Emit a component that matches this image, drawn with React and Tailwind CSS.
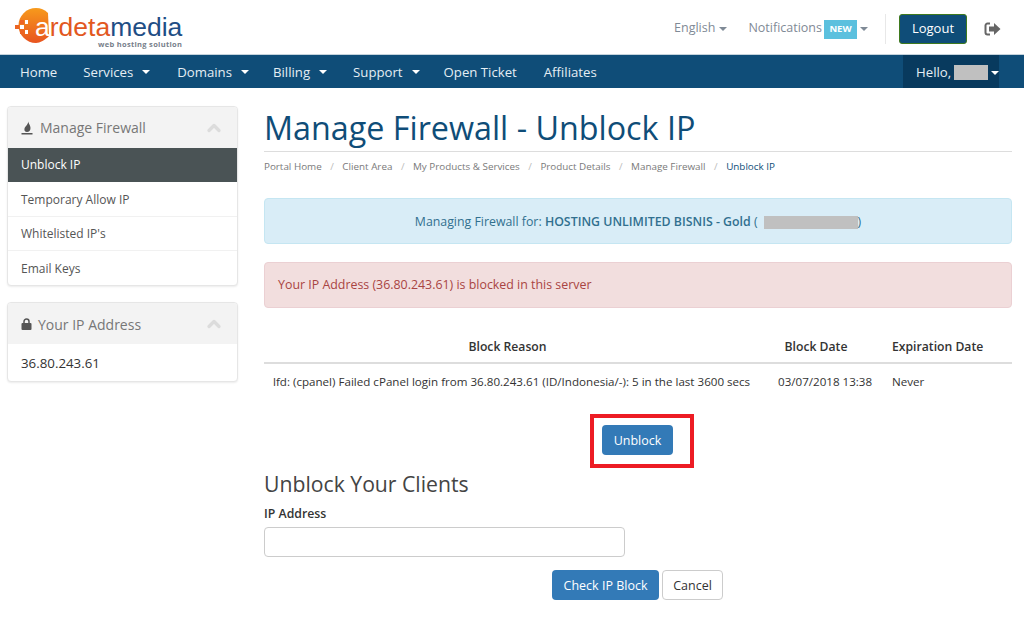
import React from 'react';
import { ChevronUp } from 'lucide-react';

function Caret({ className = '' }) {
  return <span className={`inline-block w-0 h-0 border-x-[4px] border-x-transparent border-t-[4px] border-t-current ${className}`} />;
}

function Logo() {
  return (
    <div className="relative w-[172px] h-[42px]">
      <svg width="44" height="38" viewBox="0 0 44 38" className="absolute left-0 top-0">
        <defs>
          <linearGradient id="lg" x1="0" y1="0" x2="0" y2="1">
            <stop offset="0" stopColor="#f79a1c" />
            <stop offset="1" stopColor="#e8541f" />
          </linearGradient>
        </defs>
        <path d="M22 2 A17.500 17.500 0 0 1 34 7 L35 30 C31 34 26 37 22 37 A17.500 17.500 0 0 1 22 2 Z" fill="url(#lg)" />
        <rect x="1" y="19" width="4" height="4" fill="#ec6423" />
        <rect x="6" y="14" width="4" height="4" fill="#ec6423" />
        <rect x="6" y="24" width="4" height="4" fill="#ec6423" />
        <rect x="6" y="19" width="4" height="4" fill="#fff" />
        <rect x="11" y="14" width="3" height="4" fill="#fff" />
        <rect x="11" y="24" width="3" height="4" fill="#fff" />
      </svg>
      <div className="absolute left-[21px] top-[11px] text-[26.500px] leading-[21px] font-['Liberation_Sans',sans-serif] whitespace-nowrap">
        <span className="text-white">a</span><span className="text-[#e2581f]">rdeta</span><span className="text-[#1f4e85]">media</span>
      </div>
      <div className="absolute left-[84px] top-[34px] text-[7.500px] leading-[8px] font-bold tracking-[0.3px] text-[#77808a] whitespace-nowrap font-['Open_Sans',sans-serif]">web hosting solution</div>
    </div>
  );
}

function NavItem({ label, caret, className = '' }) {
  return (
    <span className={`flex items-center gap-[9px] text-[#e5eef4] text-[13.200px] ${className}`}>
      {label}
      {caret && <Caret className="text-white" />}
    </span>
  );
}

function Panel({ icon, title, titleClass = '', children }) {
  return (
    <div className="bg-white border border-[#e6e6e6] rounded-[4px] shadow-[0_1px_2px_rgba(0,0,0,0.08)] overflow-hidden">
      <div className="h-[41px] bg-[#f3f3f3] flex items-center pl-[13px] pr-[13px]">
        {icon}
        <span className={`text-[#777] text-[14px] ${titleClass}`}>{title}</span>
        <ChevronUp className="ml-auto text-[#dcdcdc]" size={20} strokeWidth={4} />
      </div>
      {children}
    </div>
  );
}

export default function App() {
  return (
    <div className="w-[1024px] h-[624px] overflow-hidden bg-white font-['Open_Sans',sans-serif] text-[13px] text-[#333]">
      {/* Header */}
      <div className="h-[54px] flex items-center pl-[14px] pr-[23px]">
        <Logo />
        <div className="ml-auto mt-[4px] flex items-center h-[32px] text-[#7f8a96] text-[12.500px]">
          <span className="flex items-center gap-[4px]"><span className="pb-[2px]">English</span> <Caret /></span>
          <span className="flex items-center ml-[21px]">
            <span className="pb-[2px]">Notifications</span>
            <span className="ml-[2px] w-[33px] h-[19px] flex items-center justify-center bg-[#5bc0de] text-white text-[9.500px] font-bold">NEW</span>
            <Caret className="ml-[3px]" />
          </span>
          <span className="w-px h-[30px] bg-[#e8e8e8] ml-[17px]" />
          <span className="ml-[13px] w-[68px] h-[30px] flex items-center justify-center rounded-[3px] bg-[#0f4d78] border border-[#3f7a1e] text-white text-[13px]">Logout</span>
          <svg width="17" height="14" viewBox="0 0 17 14" className="ml-[17px]">
            <path d="M6 1.500H3.500A2 2 0 0 0 1.500 3.500V10.500A2 2 0 0 0 3.500 12.500H6" fill="none" stroke="#666" strokeWidth="2" />
            <path d="M5 4.500H10V1L16.500 7L10 13V9.500H5Z" fill="#666" />
          </svg>
        </div>
      </div>

      {/* Nav */}
      <div className="h-[34px] bg-[#0f4d78] border-t border-[#c5d3dc] flex items-stretch pl-[20px] pr-[25px]">
        <div className="flex items-center gap-[26px] pt-[2px]">
          <NavItem label="Home" />
          <NavItem label="Services" caret />
          <NavItem label="Domains" caret className="ml-[1px]" />
          <NavItem label="Billing" caret className="-ml-[2px]" />
          <NavItem label="Support" caret />
          <NavItem label="Open Ticket" className="-ml-[2px]" />
          <NavItem label="Affiliates" className="ml-[1px]" />
        </div>
        <div className="ml-auto w-[96px] bg-[#083a5e] flex items-center pl-[13px] pt-[2px] text-[13.200px] text-[#e5eef4]">
          Hello,
          <span className="ml-[3px] w-[35px] h-[15px] bg-[#c0c0c0]" />
          <Caret className="ml-[3px] text-white" />
        </div>
      </div>

      {/* Body */}
      <div className="flex pl-[7px] pr-[12px] pt-[18px]">
        <div className="w-[231px] flex flex-col gap-[16px] shrink-0">
          <Panel
            title="Manage Firewall"
            icon={
              <svg width="13" height="14" viewBox="0 0 13 14" className="mr-[6px]">
                <path d="M7.500 0C7 2 9.500 4 9.500 7C9.500 9.500 8 11 6 11C4 11 3 9.500 3.500 7.500C4 5.500 7 4 7.500 0Z" fill="#555" />
                <rect x="0.500" y="12" width="11" height="1.500" fill="#555" />
              </svg>
            }
          >
            <div className="h-[34px] bg-[#4a5355] flex items-center pl-[13px] text-white text-[12px]">Unblock IP</div>
            <div className="h-[35px] flex items-center pl-[13px] pt-[2px] text-[#555] text-[12px] border-b border-[#f1f1f1]">Temporary Allow IP</div>
            <div className="h-[34px] flex items-center pl-[13px] text-[#555] text-[12px] border-b border-[#f1f1f1]">Whitelisted IP's</div>
            <div className="h-[34px] flex items-center pl-[13px] pt-[1px] text-[#555] text-[12px]">Email Keys</div>
          </Panel>
          <Panel
            title="Your IP Address"
            titleClass="pt-[2px]"
            icon={
              <svg width="11" height="12" viewBox="0 0 11 12" className="mr-[6px]">
                <path d="M3 5.500V3.500A2.500 2.500 0 0 1 8 3.500V5.500" fill="none" stroke="#555" strokeWidth="1.500" />
                <rect x="0.500" y="5" width="10" height="7" rx="1" fill="#555" />
              </svg>
            }
          >
            <div className="h-[37px] flex items-center pl-[13px] pt-[2px] text-[#333] text-[13.300px]">36.80.243.61</div>
          </Panel>
        </div>

        <div className="ml-[26px] flex-1">
          <h1 className="text-[32.300px] leading-[40px] text-[#0f4d78] pt-[1px] border-b border-[#ddd] h-[46px] whitespace-nowrap">Manage Firewall - Unblock IP</h1>
          <div className="flex items-center h-[28px] text-[9.850px] text-[#7a7a7a]">
            <span>Portal Home</span><span className="mx-[8.500px] text-[#bbb]">/</span>
            <span>Client Area</span><span className="mx-[8.500px] text-[#bbb]">/</span>
            <span>My Products &amp; Services</span><span className="mx-[8.500px] text-[#bbb]">/</span>
            <span>Product Details</span><span className="mx-[8.500px] text-[#bbb]">/</span>
            <span>Manage Firewall</span><span className="mx-[8.500px] text-[#bbb]">/</span>
            <span className="text-[#0f4d78]">Unblock IP</span>
          </div>

          <div className="mt-[18px] h-[46px] flex items-center justify-center pt-[2px] rounded-[4px] bg-[#d9edf7] border border-[#c5e6f2] text-[#31708f] text-[12.350px]">
            <span>Managing Firewall for: <strong className="font-semibold">HOSTING UNLIMITED BISNIS - Gold</strong> (</span>
            <span className="ml-[6px] w-[94px] h-[13px] bg-[#c0c0c0]" />
            <span>)</span>
          </div>
          <div className="mt-[18px] h-[46px] flex items-center pl-[13px] rounded-[4px] bg-[#f2dede] border border-[#ebd0d3] text-[#a94442] text-[12.400px]">
            Your IP Address (36.80.243.61) is blocked in this server
          </div>

          <table className="w-full mt-[18px] border-collapse text-[12.200px]">
            <thead>
              <tr className="h-[37px] border-b-2 border-[#ddd] text-[#333]">
                <th className="font-semibold text-center w-[487px] pt-[7px]">Block Reason</th>
                <th className="font-semibold text-center w-[130px] pt-[7px]">Block Date</th>
                <th className="font-semibold text-left pl-[11px] pt-[7px]">Expiration Date</th>
              </tr>
            </thead>
            <tbody>
              <tr className="h-[37px] text-[11.600px] text-[#333]">
                <td className="pl-[9px] whitespace-nowrap">lfd: (cpanel) Failed cPanel login from 36.80.243.61 (ID/Indonesia/-): 5 in the last 3600 secs</td>
                <td className="pl-[27px] whitespace-nowrap">03/07/2018 13:38</td>
                <td className="pl-[11px]">Never</td>
              </tr>
            </tbody>
          </table>

          <div className="mt-[14px] ml-[326px]">
            <div className="w-[104px] h-[54px] border-[4px] border-[#ed1c24] flex items-start pt-[7px] pl-[8px]">
              <span className="w-[71px] h-[30px] pt-[2px] rounded-[4px] bg-[#337ab7] text-white text-[12.500px] flex items-center justify-center">Unblock</span>
            </div>
          </div>

          <h2 className="text-[21.200px] leading-[26px] mt-[3px] text-[#444]">Unblock Your Clients</h2>
          <div className="mt-[9px] text-[12.300px] font-semibold text-[#333] leading-[16px]">IP Address</div>
          <div className="mt-[5px] w-[361px] h-[30px] bg-white border border-[#ccc] rounded-[4px]" />
          <div className="mt-[13px] flex gap-[3px] pl-[288px]">
            <span className="w-[107px] h-[30px] pt-[2px] rounded-[4px] bg-[#337ab7] text-white text-[12.500px] flex items-center justify-center">Check IP Block</span>
            <span className="w-[61px] h-[30px] pt-[2px] rounded-[4px] bg-white border border-[#ccc] text-[#333] text-[12.500px] flex items-center justify-center">Cancel</span>
          </div>
        </div>
      </div>
    </div>
  );
}
